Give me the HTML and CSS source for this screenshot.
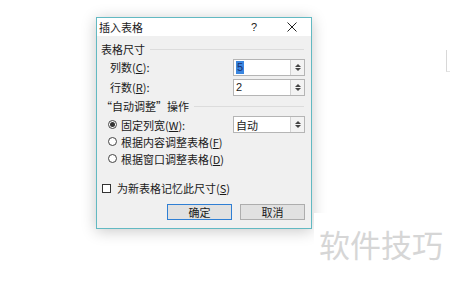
FILE: index.html
```html
<!DOCTYPE html>
<html lang="zh-CN">

<head>
    <meta charset="UTF-8">
    <meta name="viewport" content="width=device-width, initial-scale=1.0">
    <title>插入表格</title>
    <link rel="stylesheet" href="styles.css">
</head>

<body>
    <div class="dialog">
        <div class="titlebar">
            <span class="title">插入表格</span>
            <span class="help">?</span>
            <span class="close">
                <svg width="10" height="10" viewBox="0 0 10 10">
                    <path d="M0.5 0.5 L9.5 9.5 M9.5 0.5 L0.5 9.5" stroke="#222" stroke-width="1" fill="none" />
                </svg>
            </span>
        </div>

        <div class="content">
            <div class="group">
                <span>表格尺寸</span>
                <span class="rule"></span>
            </div>

            <div class="field first">
                <span class="label">列数(<u>C</u>):</span>
                <div class="spin">
                    <span class="value"><span class="selected">5</span></span>
                    <span class="arrows"><i class="up"></i><i class="down"></i></span>
                </div>
            </div>
            <div class="field second">
                <span class="label">行数(<u>R</u>):</span>
                <div class="spin">
                    <span class="value">2</span>
                    <span class="arrows"><i class="up"></i><i class="down"></i></span>
                </div>
            </div>

            <div class="group autofit">
                <span>“自动调整”操作</span>
                <span class="rule"></span>
            </div>

            <div class="option first-option">
                <span class="radio checked"></span>
                <span class="label">固定列宽(<u>W</u>):</span>
                <div class="spin">
                    <span class="value">自动</span>
                    <span class="arrows"><i class="up"></i><i class="down"></i></span>
                </div>
            </div>
            <div class="option">
                <span class="radio"></span>
                <span class="label">根据内容调整表格(<u>F</u>)</span>
            </div>
            <div class="option">
                <span class="radio"></span>
                <span class="label">根据窗口调整表格(<u>D</u>)</span>
            </div>

            <div class="remember">
                <span class="check"></span>
                <span class="label">为新表格记忆此尺寸(<u>S</u>)</span>
            </div>

            <div class="buttons">
                <button class="btn default">确定</button>
                <button class="btn">取消</button>
            </div>
        </div>
    </div>

    <!-- page corner behind the dialog -->
    <div class="corner"></div>

    <div class="watermark">软件技巧</div>
</body>

</html>
```

FILE: styles.css
```css
* {
    margin: 0;
    padding: 0;
    box-sizing: border-box;
}

html,
body {
    background-color: #fff;
    height: 100%;
}

body {
    font-family: "Noto Sans CJK SC", "Liberation Sans", sans-serif;
    font-size: 11px;
    color: #1a1a1a;
    padding: 17px 0 0 96px;
}

u {
    text-decoration: underline;
    text-underline-offset: 1px;
}

.dialog {
    width: 216px;
    height: 212px;
    border: 1px solid #62b9c2;
    background-color: #f0f0f0;
    box-shadow: 0 2px 14px rgba(0, 0, 0, 0.22);
    display: flex;
    flex-direction: column;
}

.titlebar {
    height: 18px;
    background-color: #fff;
    display: flex;
    align-items: center;
    padding-left: 2px;
}

.title {
    flex: 1;
}

.help {
    width: 12px;
    text-align: center;
    margin-right: 27px;
    font-family: "Liberation Sans", sans-serif;
    font-size: 11px;
}

.close {
    width: 10px;
    height: 10px;
    margin-right: 14px;
    display: flex;
}

.content {
    flex: 1;
    padding: 4px 6px 0 4px;
    display: flex;
    flex-direction: column;
}

.group {
    height: 18px;
    display: flex;
    align-items: center;
}

.group .rule {
    flex: 1;
    height: 1px;
    background-color: #dcdcdc;
    margin-left: 5px;
    margin-right: 1px;
}

.autofit {
    margin-top: 1px;
}

.field {
    height: 18px;
    display: flex;
    align-items: center;
    padding-left: 9px;
}

.field.second {
    margin-top: 2px;
}

.label {
    flex: 1;
    white-space: nowrap;
}

.spin {
    width: 72px;
    height: 17px;
    border: 1px solid #b5b5b5;
    background-color: #fff;
    display: flex;
}

.spin .value {
    flex: 1;
    padding-left: 2px;
    display: flex;
    align-items: center;
    font-family: "Liberation Sans", "Noto Sans CJK SC", sans-serif;
}

.spin .value .selected {
    background-color: #3a86e0;
    color: #1b2f6e;
    padding: 0 1px;
    line-height: 13px;
}

.option .spin .value {
    font-family: "Noto Sans CJK SC", sans-serif;
}

.arrows {
    width: 14px;
    border-left: 1px solid #d2d2d2;
    background-color: #f3f3f3;
    display: flex;
    flex-direction: column;
    align-items: center;
    justify-content: center;
    gap: 1px;
}

.arrows i {
    width: 0;
    height: 0;
    border-left: 3px solid transparent;
    border-right: 3px solid transparent;
}

.arrows .up {
    border-bottom: 3px solid #444;
}

.arrows .down {
    border-top: 3px solid #444;
}

.option {
    height: 17px;
    display: flex;
    align-items: center;
    padding-left: 7px;
}

.first-option {
    margin-top: 1px;
}

.radio {
    width: 9px;
    height: 9px;
    border: 1px solid #444;
    border-radius: 50%;
    background-color: #fff;
    margin-right: 4px;
    display: flex;
    align-items: center;
    justify-content: center;
}

.radio.checked::after {
    content: '';
    width: 5px;
    height: 5px;
    border-radius: 50%;
    background-color: #333;
}

.remember {
    height: 18px;
    margin-top: 12px;
    display: flex;
    align-items: center;
    padding-left: 1px;
}

.check {
    width: 9px;
    height: 9px;
    border: 1px solid #333;
    background-color: #fff;
    margin-right: 6px;
}

.buttons {
    margin-top: 7px;
    display: flex;
    justify-content: flex-end;
    gap: 8px;
}

.btn {
    width: 65px;
    height: 16px;
    border: 1px solid #adadad;
    background-color: #e1e1e1;
    font-family: "Noto Sans CJK SC", sans-serif;
    font-size: 11px;
    line-height: 14px;
    color: #1a1a1a;
}

.btn.default {
    border-color: #2f7fd4;
}

.corner {
    position: absolute;
    left: 446px;
    top: 50px;
    width: 5px;
    height: 22px;
    border-left: 1px solid #d8d8d8;
    border-bottom: 1px solid #e4e4e4;
}

.watermark {
    position: absolute;
    left: 314px;
    top: 213px;
    padding: 13px 0 11px 5px;
    background-color: #fff;
    font-size: 31px;
    line-height: 36px;
    color: #d6d6d6;
    letter-spacing: 0;
}
```
